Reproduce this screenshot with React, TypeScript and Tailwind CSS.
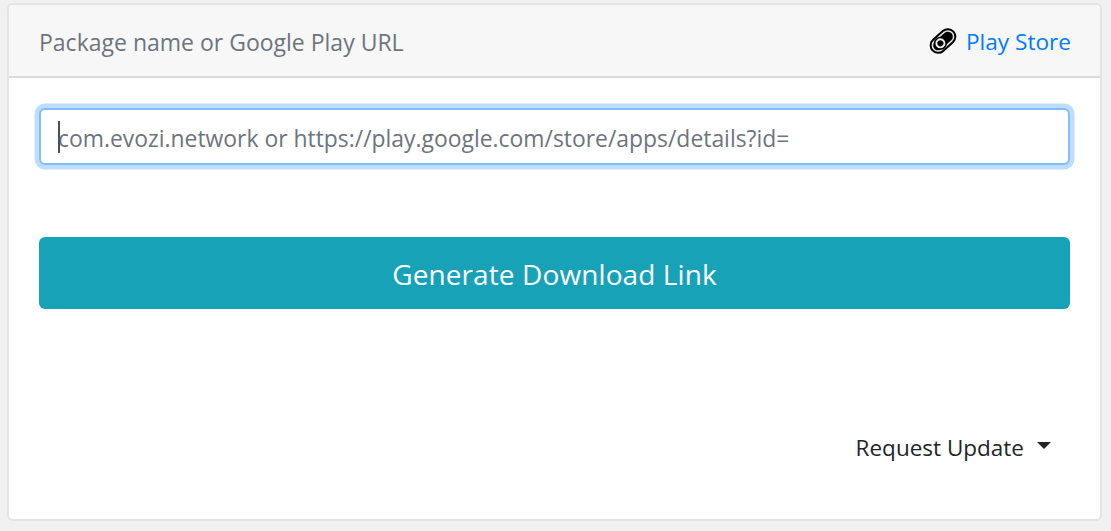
export default function App() {
  return (
    <div className="h-[531px] w-[1111px] overflow-hidden bg-[#f1f1f1] pl-[7px] pt-[3px] font-['Open_Sans',sans-serif]">
      <div className="h-[518px] w-[1095px] rounded-[6px] border-2 border-[#e4e4e4] bg-white">
        <div className="flex h-[73px] items-center justify-between rounded-t-[4px] border-b-2 border-[#dadada] bg-[#f7f7f7] pl-[30px] pr-[29px] pt-[3px]">
          <span className="text-[23px] text-[#6c757d]">Package name or Google Play URL</span>
          <a className="flex items-center gap-[9px] text-[22.6px] text-[#007bff]">
            <svg width="28" height="28" viewBox="0 0 28 28" className="-mt-[1px]">
              <g transform="rotate(-42 14 14)">
                <rect x="-1" y="5.5" width="30" height="17" rx="8.5" fill="#000" />
                <rect x="1" y="7.5" width="26" height="13" rx="6.5" fill="#e4e4e4" />
                <rect x="2.5" y="9" width="23" height="10" rx="5" fill="#000" />
                <circle cx="10.5" cy="14" r="6.5" fill="#000" />
                <circle cx="10.5" cy="14" r="5" fill="#eee" />
                <circle cx="10.5" cy="14" r="3" fill="#000" />
              </g>
            </svg>
            Play Store
          </a>
        </div>
        <div className="px-[30px] pt-[30px]">
          <div className="relative">
            <input
              readOnly
              placeholder="com.evozi.network or https://play.google.com/store/apps/details?id="
              className="block h-[57px] w-full rounded-[6px] border-2 border-[#80bdff] bg-white pl-[17px] pr-[17px] pt-[3px] text-[22.9px] text-[#495057] shadow-[0_0_0_4.5px_#bfdeff] outline-none placeholder:text-[#6c757d]"
            />
            <span className="absolute left-[19px] top-[13px] h-[32px] w-[2px] bg-[#495057]" />
          </div>
          <button className="mt-[72px] flex h-[72px] w-full items-center justify-center rounded-[6px] bg-[#17a2b8] pt-[2px] text-[28px] tracking-[0.1px] text-white">
            Generate Download Link
          </button>
          <div className="mt-[125px] flex items-center justify-end gap-[13px] pr-[19px] text-[#212529]">
            <span className="-mt-[3px] text-[22.5px]">Request Update</span>
            <span className="mb-[8px] h-0 w-0 border-x-[7px] border-t-[7px] border-x-transparent border-t-[#212529]" />
          </div>
        </div>
      </div>
    </div>
  );
}
